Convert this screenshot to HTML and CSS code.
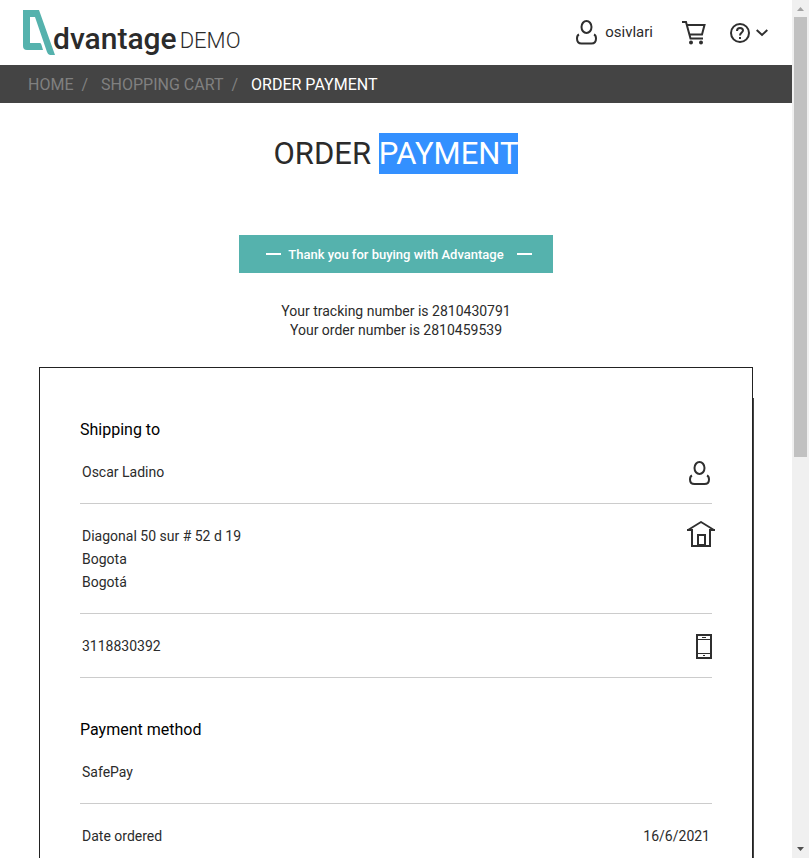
FILE: index.html
```html
<!DOCTYPE html>
<html lang="en">
<head>
<meta charset="utf-8">
<meta name="viewport" content="width=device-width, initial-scale=1">
<title>Advantage Demo - Order Payment</title>
<link rel="stylesheet" href="styles.css">
</head>
<body>
<div class="page">
  <header class="header">
    <a class="logo" href="#">
      <svg class="logo-mark" viewBox="0 0 32 46" width="32" height="46" aria-hidden="true">
        <path fill="#55b2ad" d="M0 0H16L32 45H27Q25 45 24 42L12 7H7V33H17Q18 33 18.500 35L20 40H4Q0 40 0 36Z"/>
      </svg>
      <span class="logo-name">dvantage</span><span class="logo-demo">DEMO</span>
    </a>
    <nav class="tools">
      <a class="user" href="#">
        <svg viewBox="0 0 21 25" width="21" height="25" class="icon" aria-hidden="true"><ellipse cx="10.500" cy="7" rx="5" ry="6"/><path d="M3 14.500C1.500 15.200 1 17 1 18.500C1 22 2.500 23.500 5.500 23.500H15.500C18.500 23.500 20 22 20 18.500C20 17 19.500 15.200 18 14.500"/></svg>
        <span>osivlari</span>
      </a>
      <a class="cart" href="#" aria-label="Cart">
        <svg viewBox="0 0 24 24" width="24" height="24" class="icon" aria-hidden="true"><path d="M0 1H4L8.500 17.500H21M4.500 4H22.500L20 13.500H7.500"/><circle class="solid" cx="9" cy="21.500" r="2"/><circle class="solid" cx="19" cy="21.500" r="2"/></svg>
      </a>
      <button class="help" type="button" aria-label="Help">
        <svg viewBox="0 0 20 20" width="20" height="20" class="icon" aria-hidden="true"><circle cx="10" cy="10" r="9"/><path d="M7 8Q7 5 10 5T13 7.500C13 9.500 10 9.500 10 12.500M10 14V16"/></svg>
        <svg viewBox="0 0 12 8" width="12" height="8" class="icon" aria-hidden="true"><path d="M.7 1L6 6L11.300 1"/></svg>
      </button>
    </nav>
  </header>
  <nav class="crumbs" aria-label="Breadcrumb">
    <a href="#">HOME</a><span class="slash">/</span><a href="#">SHOPPING CART</a><span class="slash">/</span><span class="current">ORDER PAYMENT</span>
  </nav>
  <main>
    <h1>ORDER <span class="selected">PAYMENT</span></h1>
    <p class="thanks"><span>Thank you for buying with Advantage</span></p>
    <div class="numbers">
      <p>Your tracking number is 2810430791</p>
      <p>Your order number is 2810459539</p>
    </div>
    <section class="card">
      <h2>Shipping to</h2>
      <div class="row">
        <p>Oscar Ladino</p>
        <svg viewBox="0 0 21 25" width="21" height="25" class="icon person" aria-hidden="true"><ellipse cx="10.500" cy="7" rx="5" ry="6"/><path d="M3 14.500C1.500 15.200 1 17 1 18.500C1 22 2.500 23 5.500 23H15.500C18.500 23 20 22 20 18.500C20 17 19.500 15.200 18 14.500"/></svg>
      </div>
      <div class="row">
        <p>Diagonal 50 sur # 52 d 19<br>Bogota<br>Bogotá</p>
        <svg viewBox="0 0 28 27" width="28" height="27" class="icon house" aria-hidden="true"><path d="M1 9L14 1L27 9" stroke-width="1.800"/><path d="M0 9H5V25H23V9H28"/><rect x="11" y="14" width="7" height="10"/></svg>
      </div>
      <div class="row">
        <p>3118830392</p>
        <svg viewBox="0 0 16 25" width="16" height="25" class="icon" aria-hidden="true"><rect x="1" y="1" width="14" height="23"/><path d="M1 5.500H15M1 19.500H15M6 3.500H10M7 21.500H9" stroke-width="1"/></svg>
      </div>
      <h2>Payment method</h2>
      <div class="row"><p>SafePay</p></div>
      <div class="row"><p>Date ordered</p><p>16/6/2021</p></div>
    </section>
  </main>
</div>
<div class="scrollbar" aria-hidden="true">
  <svg viewBox="0 0 17 17" width="17" height="17"><path fill="#a3a3a3" d="M5 11L8.500 7L12 11Z"/></svg>
  <div class="track"><div class="thumb"></div></div>
  <svg viewBox="0 0 17 17" width="17" height="17"><path fill="#505050" d="M5 6L8.500 10L12 6Z"/></svg>
</div>
</body>
</html>
```
FILE: styles.css
```css
* { box-sizing: border-box; }

body {
  margin: 0;
  height: 100vh;
  overflow: hidden;
  display: grid;
  grid-template-columns: minmax(0, 1fr) 17px;
  font-family: Roboto, "Liberation Sans", sans-serif;
  font-size: 14px;
  color: #2b2b2b;
  background: #fff;
}

h1, h2, p { margin: 0; font-weight: 400; }
a { color: inherit; text-decoration: none; }
svg { display: block; flex: none; }

.page { height: 100vh; overflow: hidden; }

.icon { fill: none; stroke: #2f2f2f; stroke-width: 2; }
.icon .solid { fill: #2f2f2f; stroke: none; }

.header {
  height: 65px;
  padding: 0 24px 0 23px;
  display: flex;
  justify-content: space-between;
}

.logo { display: flex; align-items: flex-start; padding-top: 10px; }
.logo-name {
  font-size: 30px;
  line-height: 34px;
  font-weight: 500;
  padding-top: 12px;
  margin-left: -2px;
}
.logo-demo {
  font-size: 22px;
  line-height: 26px;
  font-weight: 300;
  padding-top: 18px;
  margin-left: 3px;
}

.tools { display: flex; align-items: center; }
.user { display: flex; align-items: center; gap: 8px; font-size: 15px; }
.user span { padding-bottom: 2px; }
.cart { margin-left: 29px; }
.help {
  display: flex;
  align-items: center;
  gap: 6px;
  margin: 0 0 0 24px;
  padding: 0;
  border: 0;
  background: none;
}

.crumbs {
  height: 38px;
  padding-left: 28px;
  display: flex;
  align-items: center;
  background: #444;
  color: #808080;
  font-size: 16px;
}
.slash { margin: 0 13px 0 8px; }
.current { color: #fff; }

main { text-align: center; padding: 30px 39px 0; }

h1 { font-size: 31px; line-height: 41px; }
.selected { display: inline-block; background: #3390ff; color: #fff; }

.thanks {
  display: flex;
  align-items: center;
  width: fit-content;
  margin: 61px auto 0;
  padding: 0 21px 0 27px;
  background: #55b2ad;
  color: #fff;
  font-size: 13px;
  line-height: 18px;
  font-weight: 500;
}
.thanks span { padding: 11px 13px 9px 7px; }
.thanks::before, .thanks::after {
  content: "";
  width: 15px;
  height: 2px;
  background: #fff;
}

.numbers { margin-top: 29px; line-height: 19px; }

.card {
  margin-top: 27px;
  padding: 50px 40px;
  text-align: left;
  border: 1px solid #222;
  box-shadow: 1px 31px 0 #444;
}
h2 { font-size: 16px; line-height: 24px; color: #000; }
.row + h2 { margin-top: 40px; }

.row {
  display: flex;
  justify-content: space-between;
  align-items: flex-start;
  padding: 21px 2px 19px;
  line-height: 23px;
  border-bottom: 1px solid #ccc;
}
h2 + .row { padding-top: 19px; }
.row .icon { margin: -1px -2px; }
.row .person { margin: 0 0 -2px; }
.row .house { margin: -4px -5px; }

.scrollbar {
  height: 100vh;
  display: flex;
  flex-direction: column;
  background: #f0f0f0;
}
.track { flex: 1; padding: 0 2px; }
.thumb { height: 53.4%; background: #c1c1c1; }
```
